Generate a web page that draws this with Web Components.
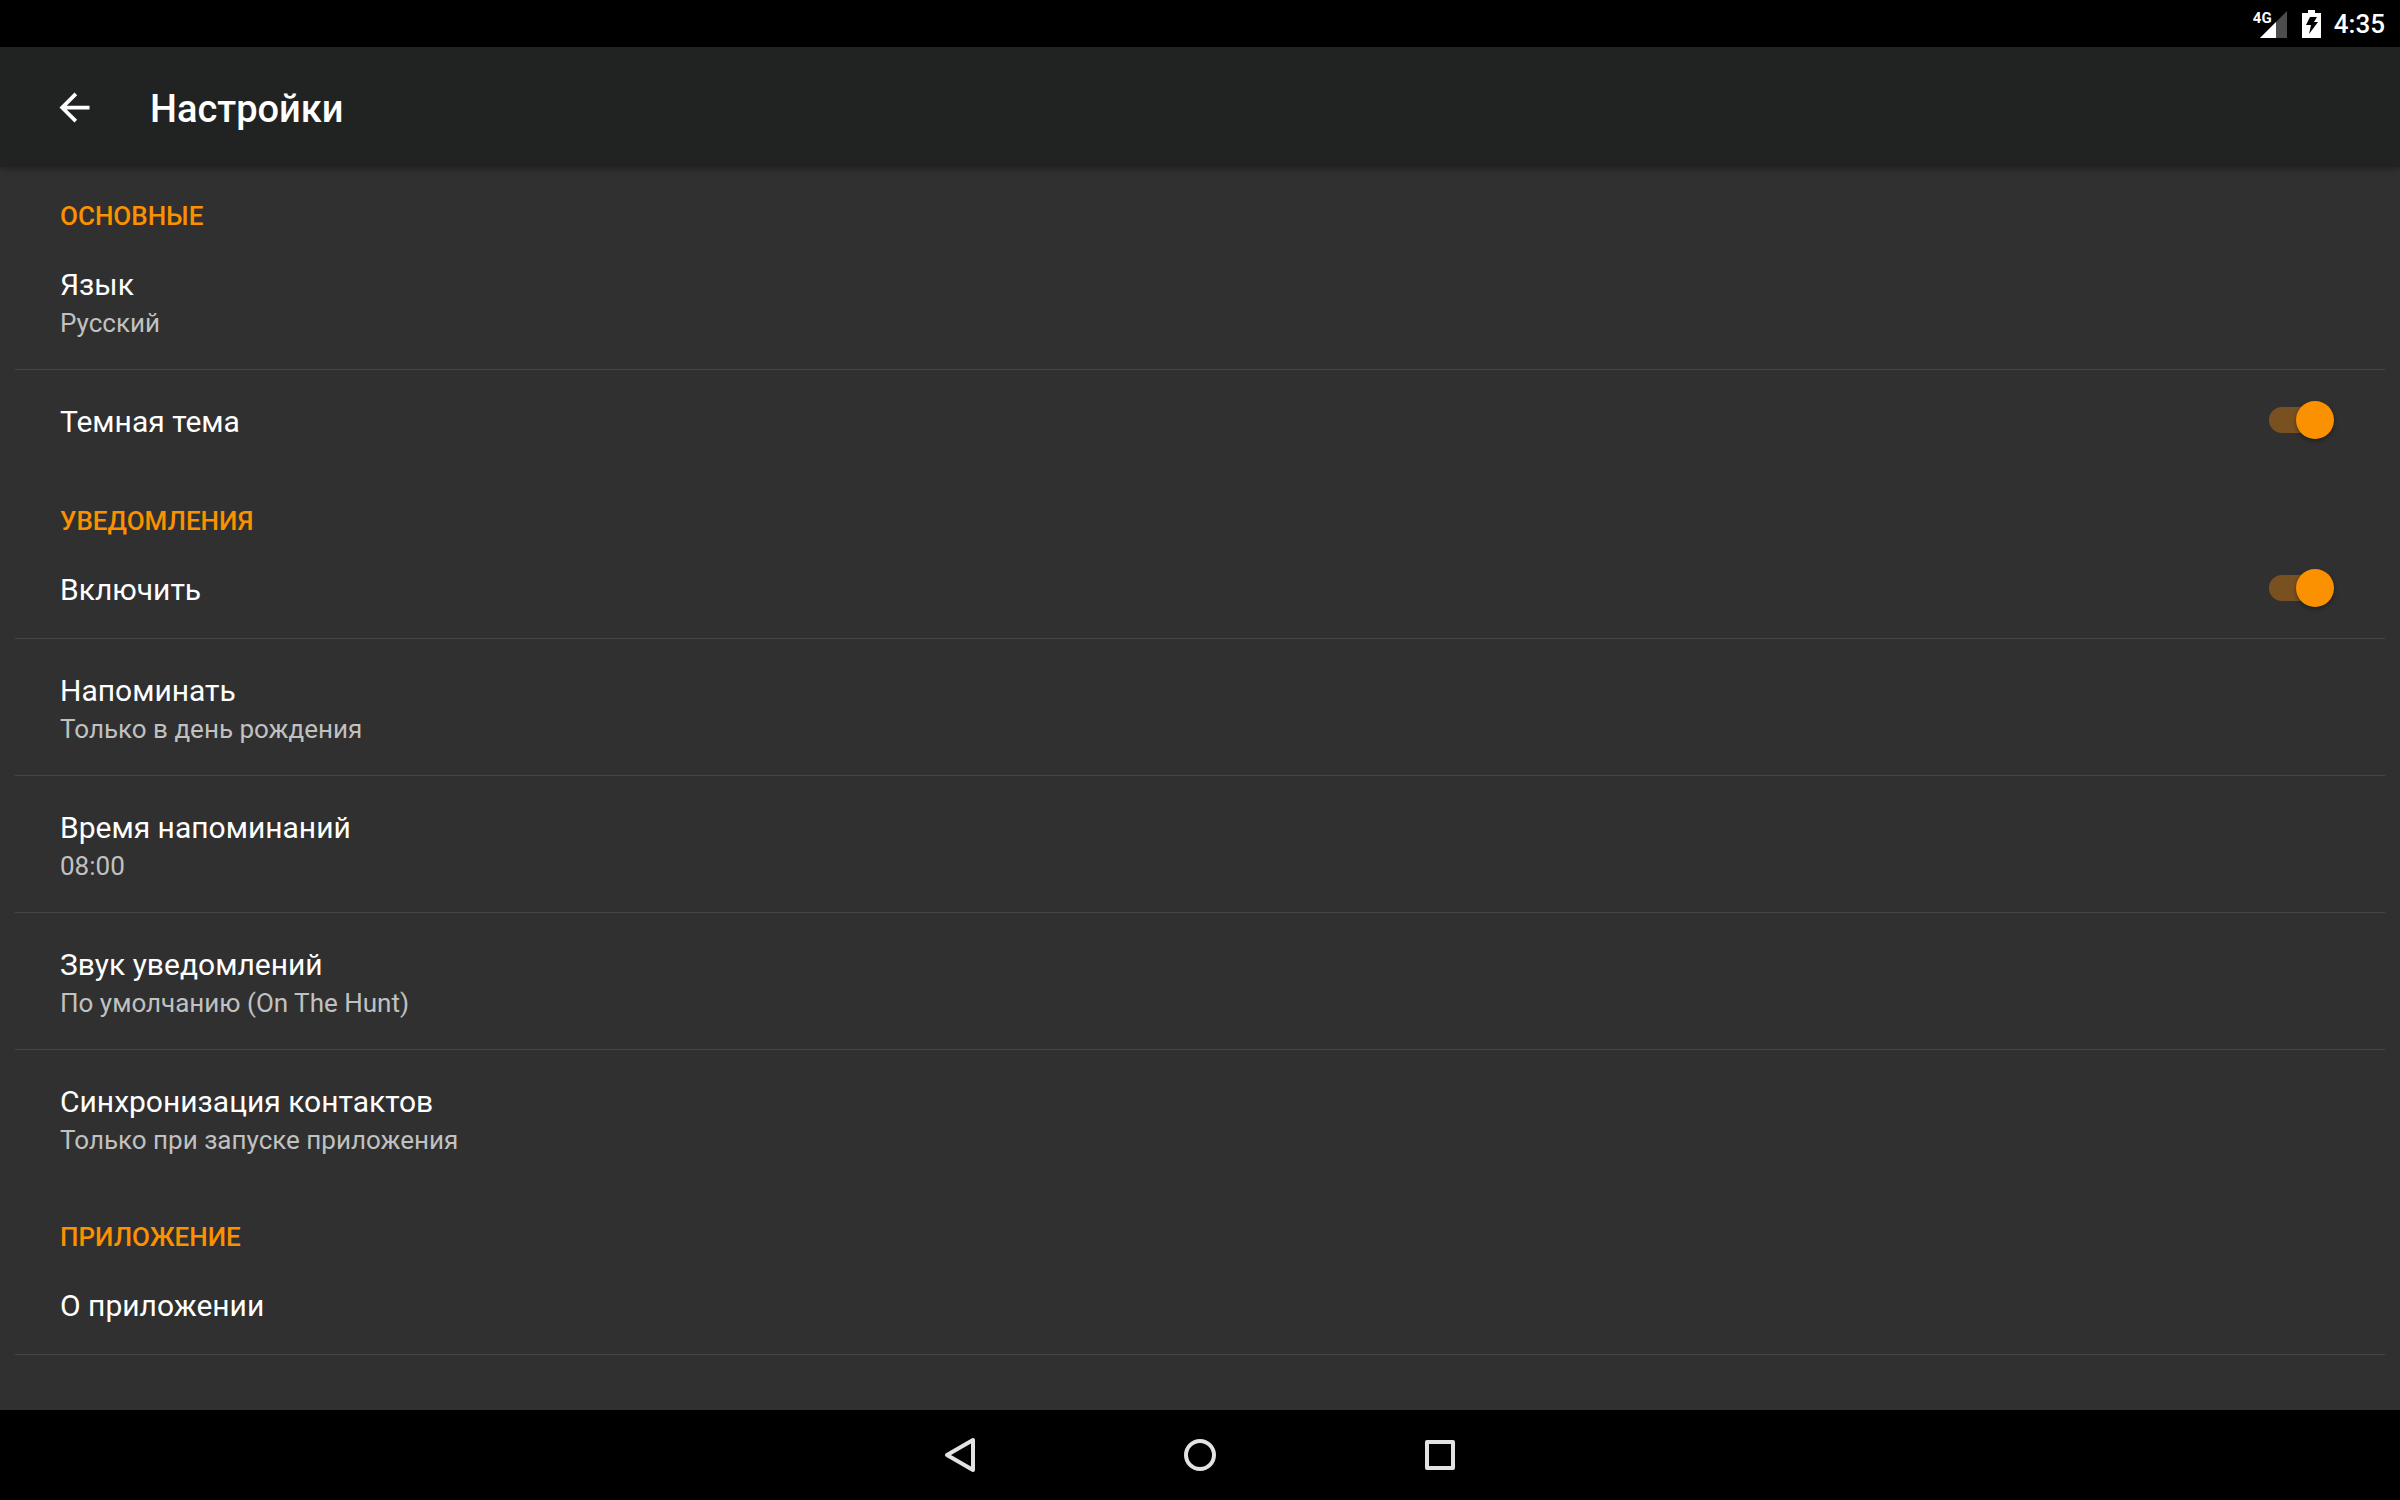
<!DOCTYPE html>
<html lang="ru">
<head>
<meta charset="utf-8">
<meta name="viewport" content="width=device-width, initial-scale=1">
<title>Настройки</title>
<style>
    html, body {
        height: 100%;
        margin: 0;
    }
    body {
        background: #303030;
        color: #fff;
        font-family: Roboto, "Noto Sans", sans-serif;
    }
</style>
</head>
<body>
<device-screen>
    <status-bar slot="status" network="4G" time="4:35"></status-bar>
    <app-bar slot="header">Настройки</app-bar>

    <settings-section heading="Основные">
        <settings-row summary="Русский" divided>Язык</settings-row>
        <settings-switch checked>Темная тема</settings-switch>
    </settings-section>

    <settings-section heading="Уведомления">
        <settings-switch checked divided>Включить</settings-switch>
        <settings-row summary="Только в день рождения" divided>Напоминать</settings-row>
        <settings-row summary="08:00" divided>Время напоминаний</settings-row>
        <settings-row summary="По умолчанию (On The Hunt)" divided>Звук уведомлений</settings-row>
        <settings-row summary="Только при запуске приложения">Синхронизация контактов</settings-row>
    </settings-section>

    <settings-section heading="Приложение">
        <settings-row divided>О приложении</settings-row>
    </settings-section>

    <nav-bar slot="footer"></nav-bar>
</device-screen>

<script>
class DeviceScreen extends HTMLElement {
    constructor() {
        super();
        this.attachShadow({ mode: 'open' });
        this.shadowRoot.innerHTML = `
      <style>
        :host {
          display: flex;
          flex-direction: column;
          height: 100vh;
        }
        main {
          flex: 1;
          min-height: 0;
          overflow: hidden;
          display: flex;
          flex-direction: column;
          gap: 2px;
        }
      </style>
      <slot name="status"></slot>
      <slot name="header"></slot>
      <main><slot></slot></main>
      <slot name="footer"></slot>
    `;
    }
}

class StatusBar extends HTMLElement {
    constructor() {
        super();
        this.attachShadow({ mode: 'open' });
    }

    connectedCallback() {
        this.shadowRoot.innerHTML = `
      <style>
        :host {
          display: flex;
          align-items: center;
          justify-content: flex-end;
          height: 47px;
          padding-right: 15px;
          background: #000;
          font-weight: 500;
          font-size: 26px;
          line-height: 32px;
        }
        svg {
          display: block;
        }
        .signal {
          position: relative;
          margin-right: 15px;
        }
        .signal span {
          position: absolute;
          left: -7px;
          top: 0;
          font-size: 15px;
          font-weight: 700;
          line-height: 16px;
        }
        .battery {
          margin-right: 13px;
        }
      </style>
      <div class="signal">
        <svg width="27" height="28" viewBox="0 0 27 28">
          <path d="M27 1v27H0z" fill="#4d4d4d"/>
          <path d="M16 12v16H0z" fill="#fff"/>
        </svg>
        <span>${this.getAttribute('network')}</span>
      </div>
      <svg class="battery" width="19" height="28" viewBox="0 0 19 28">
        <path d="M6 0h7v3h6v25H0V3h6z" fill="#fff"/>
        <path d="M8 7h7l-3 5h4L7 24l2-9H4z" fill="#000"/>
      </svg>
      <time>${this.getAttribute('time')}</time>
    `;
    }
}

class AppBar extends HTMLElement {
    constructor() {
        super();
        this.attachShadow({ mode: 'open' });
        this.shadowRoot.innerHTML = `
      <style>
        :host {
          display: flex;
          align-items: center;
          gap: 53px;
          height: 120px;
          padding: 0 52px;
          box-sizing: border-box;
          background: #212322;
          box-shadow: 0 2px 6px rgba(0, 0, 0, .3);
          z-index: 1;
        }
        button {
          padding: 0;
          border: 0;
          background: none;
          color: inherit;
          cursor: pointer;
        }
        svg {
          display: block;
        }
        h1 {
          margin: 0;
          padding-top: 4px;
          font-size: 38px;
          font-weight: 500;
          line-height: 44px;
        }
      </style>
      <button type="button" aria-label="Назад">
        <svg width="45" height="45" viewBox="0 0 24 24" fill="currentColor">
          <path d="M20 11H7.83l5.59-5.59L12 4l-8 8 8 8 1.41-1.41L7.83 13H20v-2z"/>
        </svg>
      </button>
      <h1><slot></slot></h1>
    `;
    }
}

class SettingsSection extends HTMLElement {
    constructor() {
        super();
        this.attachShadow({ mode: 'open' });
    }

    connectedCallback() {
        this.shadowRoot.innerHTML = `
      <style>
        :host {
          display: block;
        }
        h2 {
          margin: 0;
          padding: 33px 60px 1px;
          color: #fb9100;
          font-size: 26px;
          font-weight: 500;
          line-height: 32px;
          text-transform: uppercase;
        }
      </style>
      <section>
        <h2>${this.getAttribute('heading')}</h2>
        <slot></slot>
      </section>
    `;
    }
}

// shared by plain rows and rows with a switch
const rowStyle = `
        :host {
          display: block;
          margin: 0 15px;
        }
        :host([divided]) {
          border-bottom: 1px solid #464646;
        }
        .row {
          box-sizing: border-box;
          width: 100%;
          padding: 34px 45px 30px;
          cursor: pointer;
        }
        .title {
          font-size: 30px;
          line-height: 36px;
        }
`;

class SettingsRow extends HTMLElement {
    constructor() {
        super();
        this.attachShadow({ mode: 'open' });
    }

    connectedCallback() {
        const summary = this.getAttribute('summary');
        this.shadowRoot.innerHTML = `
      <style>
        ${rowStyle}
        .row {
          display: flex;
          flex-direction: column;
          gap: 4px;
          border: 0;
          background: none;
          color: inherit;
          font: inherit;
          text-align: left;
        }
        .summary {
          color: #c1c1c1;
          font-size: 26px;
          line-height: 32px;
        }
      </style>
      <button class="row" type="button">
        <span class="title"><slot></slot></span>
        ${summary ? `<span class="summary">${summary}</span>` : ''}
      </button>
    `;
    }
}

class SettingsSwitch extends HTMLElement {
    constructor() {
        super();
        this.attachShadow({ mode: 'open' });
    }

    connectedCallback() {
        this.shadowRoot.innerHTML = `
      <style>
        ${rowStyle}
        :host {
          display: flex;
          align-items: center;
          padding-right: 51px;
        }
        input {
          appearance: none;
          flex: none;
          display: grid;
          align-items: center;
          width: 65px;
          height: 38px;
          margin: 0;
          cursor: pointer;
        }
        input::before, input::after {
          content: "";
          grid-area: 1 / 1;
        }
        input::before {
          height: 26px;
          margin-right: 6px;
          border-radius: 13px;
          background: #5d5d5d;
        }
        input::after {
          width: 38px;
          height: 38px;
          border-radius: 50%;
          background: #bdbdbd;
          box-shadow: 0 2px 4px rgba(0, 0, 0, .35);
        }
        input:checked::before {
          background: #795121;
        }
        input:checked::after {
          justify-self: end;
          background: #fb9100;
        }
      </style>
      <label class="row title" for="toggle"><slot></slot></label>
      <input id="toggle" type="checkbox" role="switch">
    `;
        this.shadowRoot.getElementById('toggle').checked = this.hasAttribute('checked');
    }
}

class NavBar extends HTMLElement {
    constructor() {
        super();
        this.attachShadow({ mode: 'open' });
        this.shadowRoot.innerHTML = `
      <style>
        :host {
          display: block;
          background: #000;
        }
        nav {
          display: flex;
          justify-content: center;
          height: 90px;
        }
        button {
          display: grid;
          place-items: center;
          width: 240px;
          padding: 0;
          border: 0;
          background: none;
          cursor: pointer;
        }
        svg {
          fill: none;
          stroke: #e3e3e3;
          stroke-width: 4;
          stroke-linejoin: round;
        }
      </style>
      <nav>
        <button type="button" aria-label="Назад">
          <svg width="40" height="40" viewBox="0 0 40 40"><path d="M33 5v30L7 20z"/></svg>
        </button>
        <button type="button" aria-label="Домой">
          <svg width="40" height="40" viewBox="0 0 40 40"><circle cx="20" cy="20" r="14"/></svg>
        </button>
        <button type="button" aria-label="Обзор">
          <svg width="40" height="40" viewBox="0 0 40 40"><path d="M7 7h26v26H7z"/></svg>
        </button>
      </nav>
    `;
    }
}

customElements.define('device-screen', DeviceScreen);
customElements.define('status-bar', StatusBar);
customElements.define('app-bar', AppBar);
customElements.define('settings-section', SettingsSection);
customElements.define('settings-row', SettingsRow);
customElements.define('settings-switch', SettingsSwitch);
customElements.define('nav-bar', NavBar);
</script>
</body>
</html>
